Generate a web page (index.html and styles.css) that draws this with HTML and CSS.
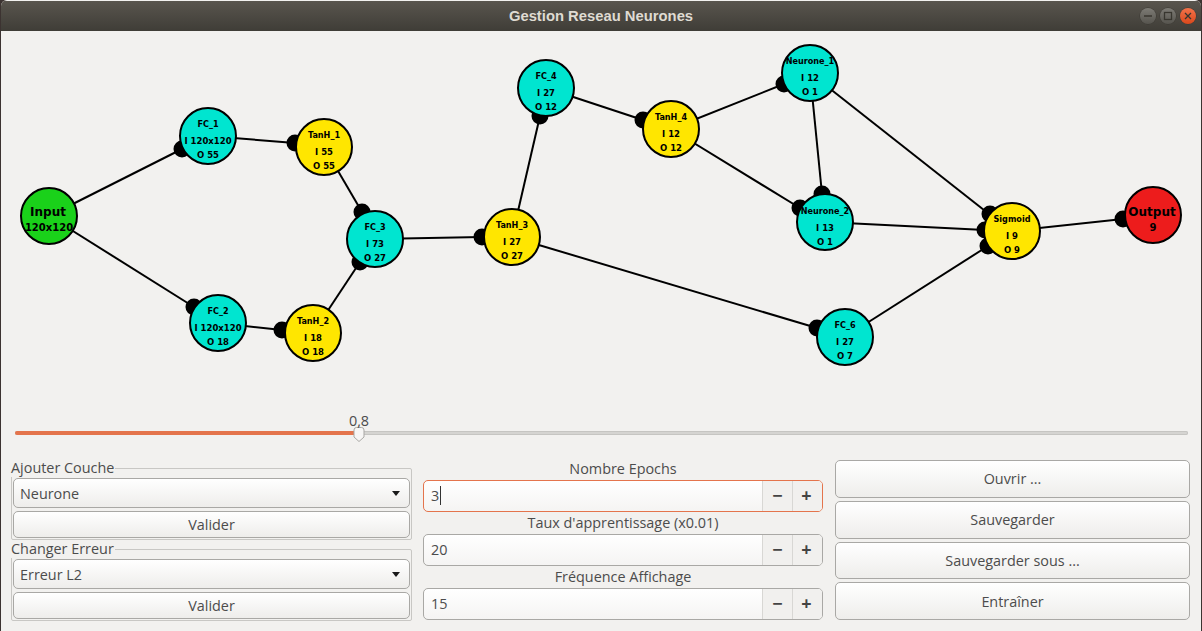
FILE: index.html
```html
<!DOCTYPE html>
<html lang="fr">
<head>
  <meta charset="UTF-8" />
  <title>Gestion Reseau Neurones</title>
  <link rel="stylesheet" href="styles.css">
</head>
<body>
  <div class="window">
    <header class="titlebar">
      <span class="title">Gestion Reseau Neurones</span>
      <div class="win-buttons">
        <span class="win-btn">
          <svg width="12" height="12" viewBox="0 0 12 12"><path d="M2 6H10" class="win-glyph"/></svg>
        </span>
        <span class="win-btn">
          <svg width="12" height="12" viewBox="0 0 12 12"><rect x="2.5" y="2.5" width="7" height="7" class="win-glyph"/></svg>
        </span>
        <span class="win-btn win-close">
          <svg width="12" height="12" viewBox="0 0 12 12"><path d="M3 3L9 9M9 3L3 9" class="win-glyph"/></svg>
        </span>
      </div>
    </header>

    <svg class="graph" viewBox="1 31 1200 374" width="1200" height="374">
      <!-- edges -->
      <g class="edges">
        <line x1="49" y1="216" x2="182" y2="149"/>
        <line x1="49" y1="216" x2="194" y2="307"/>
        <line x1="208" y1="136" x2="295" y2="143"/>
        <line x1="324" y1="147" x2="362" y2="212"/>
        <line x1="218" y1="323" x2="282" y2="330"/>
        <line x1="313" y1="333" x2="360" y2="262"/>
        <line x1="375" y1="239" x2="482" y2="237"/>
        <line x1="512" y1="237" x2="540" y2="116"/>
        <line x1="512" y1="237" x2="817" y2="328"/>
        <line x1="546" y1="88" x2="643" y2="120"/>
        <line x1="671" y1="129" x2="784" y2="84"/>
        <line x1="671" y1="129" x2="800" y2="208"/>
        <line x1="810" y1="73" x2="822" y2="194"/>
        <line x1="810" y1="73" x2="989" y2="214"/>
        <line x1="825" y1="222" x2="985" y2="230"/>
        <line x1="845" y1="337" x2="988" y2="246"/>
        <line x1="1012" y1="231" x2="1123" y2="219"/>
      </g>

      <!-- ports -->
      <g class="ports">
        <circle cx="182" cy="149" r="8.5"/>
        <circle cx="295" cy="143" r="8.5"/>
        <circle cx="362" cy="212" r="8.5"/>
        <circle cx="360" cy="262" r="8.5"/>
        <circle cx="194" cy="307" r="8.5"/>
        <circle cx="282" cy="330" r="8.5"/>
        <circle cx="482" cy="237" r="8.5"/>
        <circle cx="540" cy="116" r="8.5"/>
        <circle cx="643" cy="120" r="8.5"/>
        <circle cx="784" cy="84" r="8.5"/>
        <circle cx="800" cy="208" r="8.5"/>
        <circle cx="822" cy="194" r="8.5"/>
        <circle cx="990" cy="214" r="8.5"/>
        <circle cx="985" cy="230" r="8.5"/>
        <circle cx="988" cy="246" r="8.5"/>
        <circle cx="817" cy="328" r="8.5"/>
        <circle cx="1123" cy="219" r="8.5"/>
      </g>

      <!-- nodes -->
      <circle class="node green" cx="49" cy="216" r="28"/>
      <text class="big" x="48" y="216">Input</text>
      <text class="size" x="49" y="231">120x120</text>

      <circle class="node red" cx="1153" cy="215" r="28"/>
      <text class="big" x="1152" y="216">Output</text>
      <text class="size" x="1153" y="231">9</text>

      <circle class="node cyan" cx="208" cy="136" r="28"/>
      <text class="name" x="208" y="127">FC_1</text>
      <text x="208" y="144">I 120x120</text>
      <text x="208" y="158">O 55</text>

      <circle class="node yellow" cx="324" cy="147" r="28"/>
      <text class="name" x="324" y="138">TanH_1</text>
      <text x="324" y="155">I 55</text>
      <text x="324" y="169">O 55</text>

      <circle class="node cyan" cx="375" cy="239" r="28"/>
      <text class="name" x="375" y="230">FC_3</text>
      <text x="375" y="247">I 73</text>
      <text x="375" y="261">O 27</text>

      <circle class="node cyan" cx="218" cy="323" r="28"/>
      <text class="name" x="218" y="314">FC_2</text>
      <text x="218" y="331">I 120x120</text>
      <text x="218" y="345">O 18</text>

      <circle class="node yellow" cx="313" cy="333" r="28"/>
      <text class="name" x="313" y="324">TanH_2</text>
      <text x="313" y="341">I 18</text>
      <text x="313" y="355">O 18</text>

      <circle class="node yellow" cx="512" cy="237" r="28"/>
      <text class="name" x="512" y="228">TanH_3</text>
      <text x="512" y="245">I 27</text>
      <text x="512" y="259">O 27</text>

      <circle class="node cyan" cx="546" cy="88" r="28"/>
      <text class="name" x="546" y="79">FC_4</text>
      <text x="546" y="96">I 27</text>
      <text x="546" y="110">O 12</text>

      <circle class="node yellow" cx="671" cy="129" r="28"/>
      <text class="name" x="671" y="120">TanH_4</text>
      <text x="671" y="137">I 12</text>
      <text x="671" y="151">O 12</text>

      <circle class="node cyan" cx="810" cy="73" r="28"/>
      <text class="name" x="810" y="64">Neurone_1</text>
      <text x="810" y="81">I 12</text>
      <text x="810" y="95">O 1</text>

      <circle class="node cyan" cx="825" cy="222" r="28"/>
      <text class="name" x="825" y="214">Neurone_2</text>
      <text x="825" y="231">I 13</text>
      <text x="825" y="245">O 1</text>

      <circle class="node yellow" cx="1012" cy="231" r="28"/>
      <text class="name" x="1012" y="222">Sigmoid</text>
      <text x="1012" y="239">I 9</text>
      <text x="1012" y="253">O 9</text>

      <circle class="node cyan" cx="845" cy="337" r="28"/>
      <text class="name" x="845" y="328">FC_6</text>
      <text x="845" y="345">I 27</text>
      <text x="845" y="359">O 7</text>
    </svg>

    <div class="slider">
      <div class="slider-track">
        <div class="slider-fill"></div>
        <div class="slider-thumb">
          <span class="slider-value">0,8</span>
          <svg width="12" height="15" viewBox="0 0 12 15"><path d="M1 3Q1 .5 3.500 .5H8.500Q11 .5 11 3V10L6 14.500L1 10Z" class="thumb-shape"/></svg>
        </div>
      </div>
    </div>

    <main class="controls">
      <section class="col-left">
        <fieldset class="group">
          <legend>Ajouter Couche</legend>
          <div class="combo"><span>Neurone</span><span class="arrow"></span></div>
          <button class="btn btn-valider">Valider</button>
        </fieldset>
        <fieldset class="group">
          <legend>Changer Erreur</legend>
          <div class="combo"><span>Erreur L2</span><span class="arrow"></span></div>
          <button class="btn btn-valider">Valider</button>
        </fieldset>
      </section>

      <section class="col-middle">
        <label class="spin-label">Nombre Epochs</label>
        <div class="spin spin-focus">
          <span class="spin-value"><span class="caret">3</span></span>
          <span class="spin-btn">−</span>
          <span class="spin-btn">+</span>
        </div>
        <label class="spin-label">Taux d'apprentissage (x0.01)</label>
        <div class="spin">
          <span class="spin-value">20</span>
          <span class="spin-btn">−</span>
          <span class="spin-btn">+</span>
        </div>
        <label class="spin-label">Fréquence Affichage</label>
        <div class="spin">
          <span class="spin-value">15</span>
          <span class="spin-btn">−</span>
          <span class="spin-btn">+</span>
        </div>
      </section>

      <section class="col-right">
        <button class="btn btn-big">Ouvrir ...</button>
        <button class="btn btn-big">Sauvegarder</button>
        <button class="btn btn-big">Sauvegarder sous ...</button>
        <button class="btn btn-big">Entraîner</button>
      </section>
    </main>
  </div>
</body>
</html>
```

FILE: styles.css
```css
html, body {
  margin: 0;
  height: 100%;
  overflow: hidden;
  background-color: #3c3331;
}
.window {
  margin: 0 1px;
  height: 631px;
  background-color: #f2f1ef;
  border-radius: 6px 6px 0 0;
  color: #4c4c4c;
  font-family: "Open Sans", sans-serif;
  font-size: 14.400px;
  overflow: hidden;
}

/* title bar */
.titlebar {
  height: 30px;
  margin-top: 1px;
  display: flex;
  align-items: center;
  justify-content: center;
  position: relative;
  background: linear-gradient(#59554e, #3f3d37);
}
.title {
  color: #dfdbd2;
  font-family: "Liberation Sans", sans-serif;
  font-weight: bold;
  font-size: 14.800px;
}
.win-buttons {
  position: absolute;
  right: 5px;
  top: 7px;
  display: flex;
  gap: 4px;
}
.win-btn {
  width: 16px;
  height: 16px;
  border-radius: 50%;
  display: flex;
  align-items: center;
  justify-content: center;
  background: linear-gradient(#7d7b75, #56544e);
  box-shadow: 0 0 0 .5px #3a3833;
}
.win-close {
  background: linear-gradient(#f4734a, #d9481c);
}
.win-glyph {
  fill: none;
  stroke: #38362f;
  stroke-width: 1.300;
}

/* graph */
.graph {
  display: block;
}
.edges line {
  stroke: #000;
  stroke-width: 2;
}
.ports circle {
  fill: #000;
}
.node {
  stroke: #000;
  stroke-width: 2;
}
.green { fill: #1ad11a; }
.red { fill: #ed1c1c; }
.cyan { fill: #00e5d0; }
.yellow { fill: #ffe600; }
.graph text {
  font-family: "DejaVu Sans", sans-serif;
  font-weight: bold;
  font-size: 8.500px;
  fill: #000;
  text-anchor: middle;
}
.graph .name {
  font-size: 8.100px;
}
.graph .big {
  font-size: 12px;
}
.graph .size {
  font-size: 10px;
}

/* slider */
.slider {
  height: 55px;
  padding: 26px 13px 0 14px;
  box-sizing: border-box;
}
.slider-track {
  position: relative;
  height: 4px;
  background-color: #d5d4d1;
  border-radius: 2px;
  box-shadow: inset 0 0 0 1px #c6c5c2;
}
.slider-fill {
  width: 345px;
  height: 100%;
  background-color: #e4744c;
  border-radius: 2px;
}
.slider-thumb {
  position: absolute;
  left: 338px;
  top: -4px;
  width: 12px;
  height: 15px;
}
.slider-thumb svg {
  display: block;
}
.thumb-shape {
  fill: #f7f6f5;
  stroke: #a9a8a5;
}
.slider-value {
  position: absolute;
  left: -5px;
  top: -16px;
  width: 22px;
  text-align: center;
}

/* controls */
.controls {
  display: flex;
  padding: 0 11px 0 10px;
  gap: 11px;
}
.col-left {
  width: 401px;
}
.col-middle {
  width: 400px;
}
.col-right {
  width: 355px;
  height: 160px;
  margin-left: 1px;
  display: flex;
  flex-direction: column;
  gap: 3px;
}

.group {
  margin: 0 0 1px;
  padding: 1px;
  border: 1px solid #c8c7c4;
  border-radius: 2px;
  height: 80px;
  box-sizing: border-box;
  display: flex;
  flex-direction: column;
  gap: 3px;
}
.group legend {
  padding: 0 1px 1px 0;
  line-height: 16px;
  margin-left: -2px;
}

.combo {
  height: 30px;
  flex: none;
  box-sizing: border-box;
  padding: 0 9px 0 6px;
  display: flex;
  align-items: center;
  justify-content: space-between;
  border: 1px solid #a9a8a5;
  border-radius: 5px;
  background: linear-gradient(#ffffff, #eeedeb);
}
.arrow {
  width: 0;
  height: 0;
  border-left: 4px solid transparent;
  border-right: 4px solid transparent;
  border-top: 5px solid #1a1a1a;
}
.btn {
  display: block;
  width: 100%;
  box-sizing: border-box;
  border: 1px solid #a9a8a5;
  border-radius: 5px;
  background: linear-gradient(#ffffff, #eeedeb);
  color: #4c4c4c;
  font-family: inherit;
  font-size: inherit;
  padding: 0;
}
.btn-valider {
  height: 27px;
  flex: none;
}
.btn-big {
  flex: 1;
}

.spin-label {
  display: block;
  height: 19px;
  line-height: 15px;
  text-align: center;
}
.spin-label:first-child {
  height: 20px;
  line-height: 17px;
}
.spin {
  height: 32px;
  box-sizing: border-box;
  display: flex;
  margin-bottom: 3px;
  border: 1px solid #a9a8a5;
  border-radius: 5px;
  background: linear-gradient(#ffffff, #f5f4f3);
  overflow: hidden;
}
.spin-focus {
  border-color: #e4744c;
}
.spin-value {
  flex: 1;
  padding-left: 7px;
  line-height: 30px;
}
.caret {
  border-right: 1px solid #333;
  padding-right: 1px;
}
.spin-btn {
  width: 29px;
  border-left: 1px solid #d8d7d4;
  background-color: #f1f0ee;
  text-align: center;
  line-height: 28px;
  font-size: 18px;
  font-weight: bold;
  color: #444;
}
.spin-btn:last-child {
  width: 27px;
  padding-right: 2px;
}
```
